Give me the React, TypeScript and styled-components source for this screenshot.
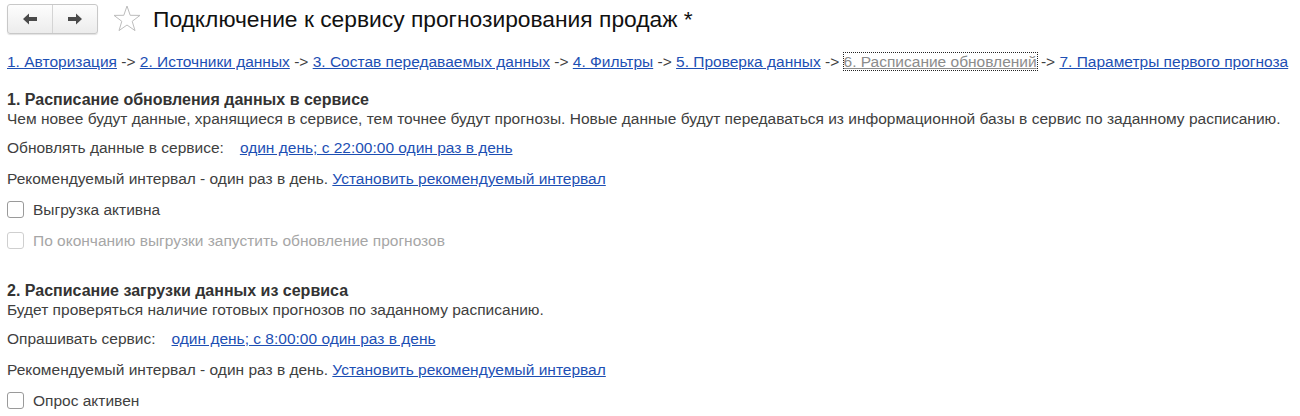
import styled, { createGlobalStyle } from "styled-components";

const GlobalStyle = createGlobalStyle`
  body {
    margin: 0;
    background: #fff;
    font-family: "Liberation Sans", Arial, sans-serif;
    color: #404040;
  }
`;

const steps = [
  "1. Авторизация",
  "2. Источники данных",
  "3. Состав передаваемых данных",
  "4. Фильтры",
  "5. Проверка данных",
  "6. Расписание обновлений",
  "7. Параметры первого прогноза",
];
const currentStep = 5;

const Page = styled.div`
  width: 1300px;
  height: 416px;
  overflow: hidden;
  padding: 4px 7px 0;
  box-sizing: border-box;
  font-size: 15.5px;
  line-height: 19px;
`;

const Header = styled.div`
  display: flex;
  align-items: center;
  height: 30px;
`;

const NavGroup = styled.div`
  display: flex;
  width: 91px;
  height: 30px;
  box-sizing: border-box;
  border: 1px solid #c8c8c8;
  border-radius: 3px;
  background: linear-gradient(#fdfdfd, #ececec);
  box-shadow: 0 1px 1px rgba(0, 0, 0, 0.12);
`;

const NavButton = styled.div<{ $divider?: boolean }>`
  flex: 1;
  display: flex;
  align-items: center;
  justify-content: center;
  border-left: ${(p) => (p.$divider ? "1px solid #d4d4d4" : "none")};
`;

const Star = styled.svg`
  margin-left: 14px;
  width: 30px;
  height: 30px;
`;

const Title = styled.h1`
  margin: 0 0 0 11px;
  font-size: 22.8px;
  font-weight: normal;
  line-height: 30px;
  color: #111;
`;

const Steps = styled.div`
  margin-top: 18px;
  color: #404040;
  white-space: nowrap;
`;

const Link = styled.a`
  color: #1d4fb4;
  text-decoration: underline;
  cursor: pointer;
`;

const CurrentStep = styled.span`
  color: #8c8c8c;
  outline: 1px dotted #222;
  text-decoration: underline;
`;

const Section = styled.section`
  margin-top: 19px;
  & + & {
    margin-top: 31px;
  }
`;

const SectionTitle = styled.div`
  font-size: 16px;
  font-weight: bold;
  color: #333;
`;

const Text = styled.div``;

const Row = styled.div`
  display: flex;
  align-items: center;
  gap: 16px;
  margin-top: 12px;
  height: 19px;
  white-space: nowrap;

  ${Text} + & {
    margin-top: 10px;
  }
`;

const CheckRow = styled.label<{ $disabled?: boolean }>`
  display: flex;
  align-items: center;
  gap: 9px;
  margin-top: 12px;
  height: 19px;
  color: ${(p) => (p.$disabled ? "#a6a6a6" : "#404040")};
`;

const Box = styled.span<{ $disabled?: boolean }>`
  width: 17px;
  height: 17px;
  box-sizing: border-box;
  border: 1px solid ${(p) => (p.$disabled ? "#cfcfcf" : "#9a9a9a")};
  border-radius: 3px;
  background: #fff;
`;

function Arrow({ dir }: { dir: "left" | "right" }) {
  return (
    <svg width="16" height="12" viewBox="0 0 16 12">
      <path
        d="M1 6 L7 0.5 L7 4 L15 4 L15 8 L7 8 L7 11.5 Z"
        fill="#4a4a4a"
        transform={dir === "right" ? "matrix(-1 0 0 1 16 0)" : undefined}
      />
    </svg>
  );
}

export default function App() {
  return (
    <>
      <GlobalStyle />
      <Page>
        <Header>
          <NavGroup>
            <NavButton>
              <Arrow dir="left" />
            </NavButton>
            <NavButton $divider>
              <Arrow dir="right" />
            </NavButton>
          </NavGroup>
          <Star viewBox="0 0 30 30">
            <path
              d="M15 2 L18.2 11.3 L28 11.4 L20.2 17.3 L23 26.6 L15 21 L7 26.6 L9.8 17.3 L2 11.4 L11.8 11.3 Z"
              fill="none"
              stroke="#bdbdbd"
              strokeWidth="1"
            />
          </Star>
          <Title>Подключение к сервису прогнозирования продаж *</Title>
        </Header>

        <Steps>
          {steps.map((s, i) => (
            <span key={s}>
              {i === currentStep ? <CurrentStep>{s}</CurrentStep> : <Link>{s}</Link>}
              {i < steps.length - 1 && " -> "}
            </span>
          ))}
        </Steps>

        <Section>
          <SectionTitle>1. Расписание обновления данных в сервисе</SectionTitle>
          <Text>
            Чем новее будут данные, хранящиеся в сервисе, тем точнее будут прогнозы. Новые данные
            будут передаваться из информационной базы в сервис по заданному расписанию.
          </Text>
          <Row>
            <span>Обновлять данные в сервисе:</span>
            <Link>один день; с 22:00:00 один раз в день</Link>
          </Row>
          <Row>
            <span>
              Рекомендуемый интервал - один раз в день. <Link>Установить рекомендуемый интервал</Link>
            </span>
          </Row>
          <CheckRow>
            <Box />
            Выгрузка активна
          </CheckRow>
          <CheckRow $disabled>
            <Box $disabled />
            По окончанию выгрузки запустить обновление прогнозов
          </CheckRow>
        </Section>

        <Section>
          <SectionTitle>2. Расписание загрузки данных из сервиса</SectionTitle>
          <Text>Будет проверяться наличие готовых прогнозов по заданному расписанию.</Text>
          <Row>
            <span>Опрашивать сервис:</span>
            <Link>один день; с 8:00:00 один раз в день</Link>
          </Row>
          <Row>
            <span>
              Рекомендуемый интервал - один раз в день. <Link>Установить рекомендуемый интервал</Link>
            </span>
          </Row>
          <CheckRow>
            <Box />
            Опрос активен
          </CheckRow>
        </Section>
      </Page>
    </>
  );
}
